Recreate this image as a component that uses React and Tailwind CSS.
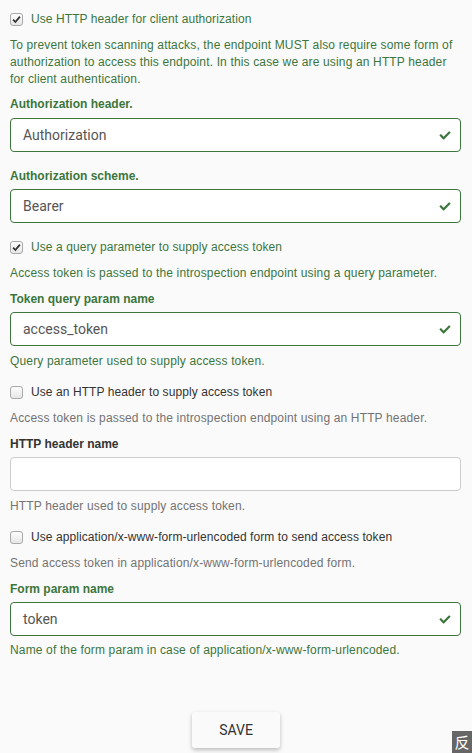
import React from "react";
import { FaCheck } from "react-icons/fa";

const GREEN = "text-[#3c763d]";

function Box({ checked }) {
  return (
    <span className="relative inline-flex items-center justify-center w-[13px] h-[13px] rounded-[3px] border border-[#a9a9a9] bg-gradient-to-b from-[#fdfdfd] to-[#e6e6e6] shrink-0">
      {checked && (
        <svg viewBox="0 0 10 10" className="w-[9px] h-[9px]">
          <path d="M1.2 5.2 L3.8 7.8 L8.8 1.8" fill="none" stroke="#333" strokeWidth="2" />
        </svg>
      )}
    </span>
  );
}

function CheckRow({ checked, color, children, className = "" }) {
  return (
    <div className={`flex items-center gap-[8px] text-[12px] leading-[17px] tracking-[0.08px] ${color} ${className}`}>
      <Box checked={checked} />
      <span>{children}</span>
    </div>
  );
}

function Label({ children, ok, className = "" }) {
  return (
    <div className={`text-[12px] leading-[17px] font-bold ${ok ? GREEN : "text-[#333]"} ${className}`}>
      {children}
    </div>
  );
}

function Input({ value, ok, className = "" }) {
  return (
    <div
      className={`relative h-[34px] rounded-[4px] border bg-white flex items-center px-3 ${
        ok ? "border-[#3c763d]" : "border-[#ccc]"
      } ${className}`}
    >
      <span className="text-[14px] text-[#555]" style={{ fontFamily: "Roboto, sans-serif" }}>{value}</span>
      {ok && <FaCheck className="absolute right-[9px] top-[11px] w-[12px] h-[11px] text-[#3c763d]" />}
    </div>
  );
}

function Help({ children, ok, className = "" }) {
  return (
    <div className={`text-[12px] leading-[17px] tracking-[0.15px] ${ok ? GREEN : "text-[#737373]"} ${className}`}>
      {children}
    </div>
  );
}

export default function App() {
  return (
    <div
      className="relative w-[472px] h-[753px] bg-[#fafafa] overflow-hidden"
      style={{ fontFamily: '"Liberation Sans", Arial, sans-serif' }}
    >
      <div className="pl-[10px] pr-[11px] pt-[11px] flex flex-col">
        <CheckRow checked color={GREEN}>Use HTTP header for client authorization</CheckRow>
        <Help ok className="mt-[9px]">
          To prevent token scanning attacks, the endpoint MUST also require some form of authorization to access this
          endpoint. In this case we are using an HTTP header for client authentication.
        </Help>
        <Label ok className="mt-[8px]">Authorization header.</Label>
        <Input ok value="Authorization" className="mt-[5px]" />
        <Label ok className="mt-[16px]">Authorization scheme.</Label>
        <Input ok value="Bearer" className="mt-[4px]" />

        <CheckRow checked color={GREEN} className="mt-[16px]">Use a query parameter to supply access token</CheckRow>
        <Help ok className="mt-[9px]">Access token is passed to the introspection endpoint using a query parameter.</Help>
        <Label ok className="mt-[9px]">Token query param name</Label>
        <Input ok value="access_token" className="mt-[4px]" />
        <Help ok className="mt-[7px]">Query parameter used to supply access token.</Help>

        <CheckRow color="text-[#333]" className="mt-[14px]">Use an HTTP header to supply access token</CheckRow>
        <Help className="mt-[9px]">Access token is passed to the introspection endpoint using an HTTP header.</Help>
        <Label className="mt-[9px]">HTTP header name</Label>
        <Input value="" className="mt-[4px]" />
        <Help className="mt-[7px]">HTTP header used to supply access token.</Help>

        <CheckRow color="text-[#333]" className="mt-[14px]">Use application/x-www-form-urlencoded form to send access token</CheckRow>
        <Help className="mt-[9px]">Send access token in application/x-www-form-urlencoded form.</Help>
        <Label ok className="mt-[9px]">Form param name</Label>
        <Input ok value="token" className="mt-[4px]" />
        <Help ok className="mt-[6px]">Name of the form param in case of application/x-www-form-urlencoded.</Help>

        <div className="flex justify-center mt-[53px] pl-[1px]">
          <button
            className="w-[88px] h-[36px] rounded-[3px] bg-[#fafafa] text-[14px] text-[#333] shadow-[0_2px_4px_rgba(0,0,0,0.25)]"
            style={{ fontFamily: "Roboto, sans-serif" }}
          >
            SAVE
          </button>
        </div>
      </div>
      <div
        className="absolute right-0 bottom-0 w-[20px] h-[22px] bg-[#666] text-white text-[15px] leading-[22px] flex justify-center"
        style={{ fontFamily: '"Noto Sans CJK SC", sans-serif' }}
      >
        反
      </div>
    </div>
  );
}
